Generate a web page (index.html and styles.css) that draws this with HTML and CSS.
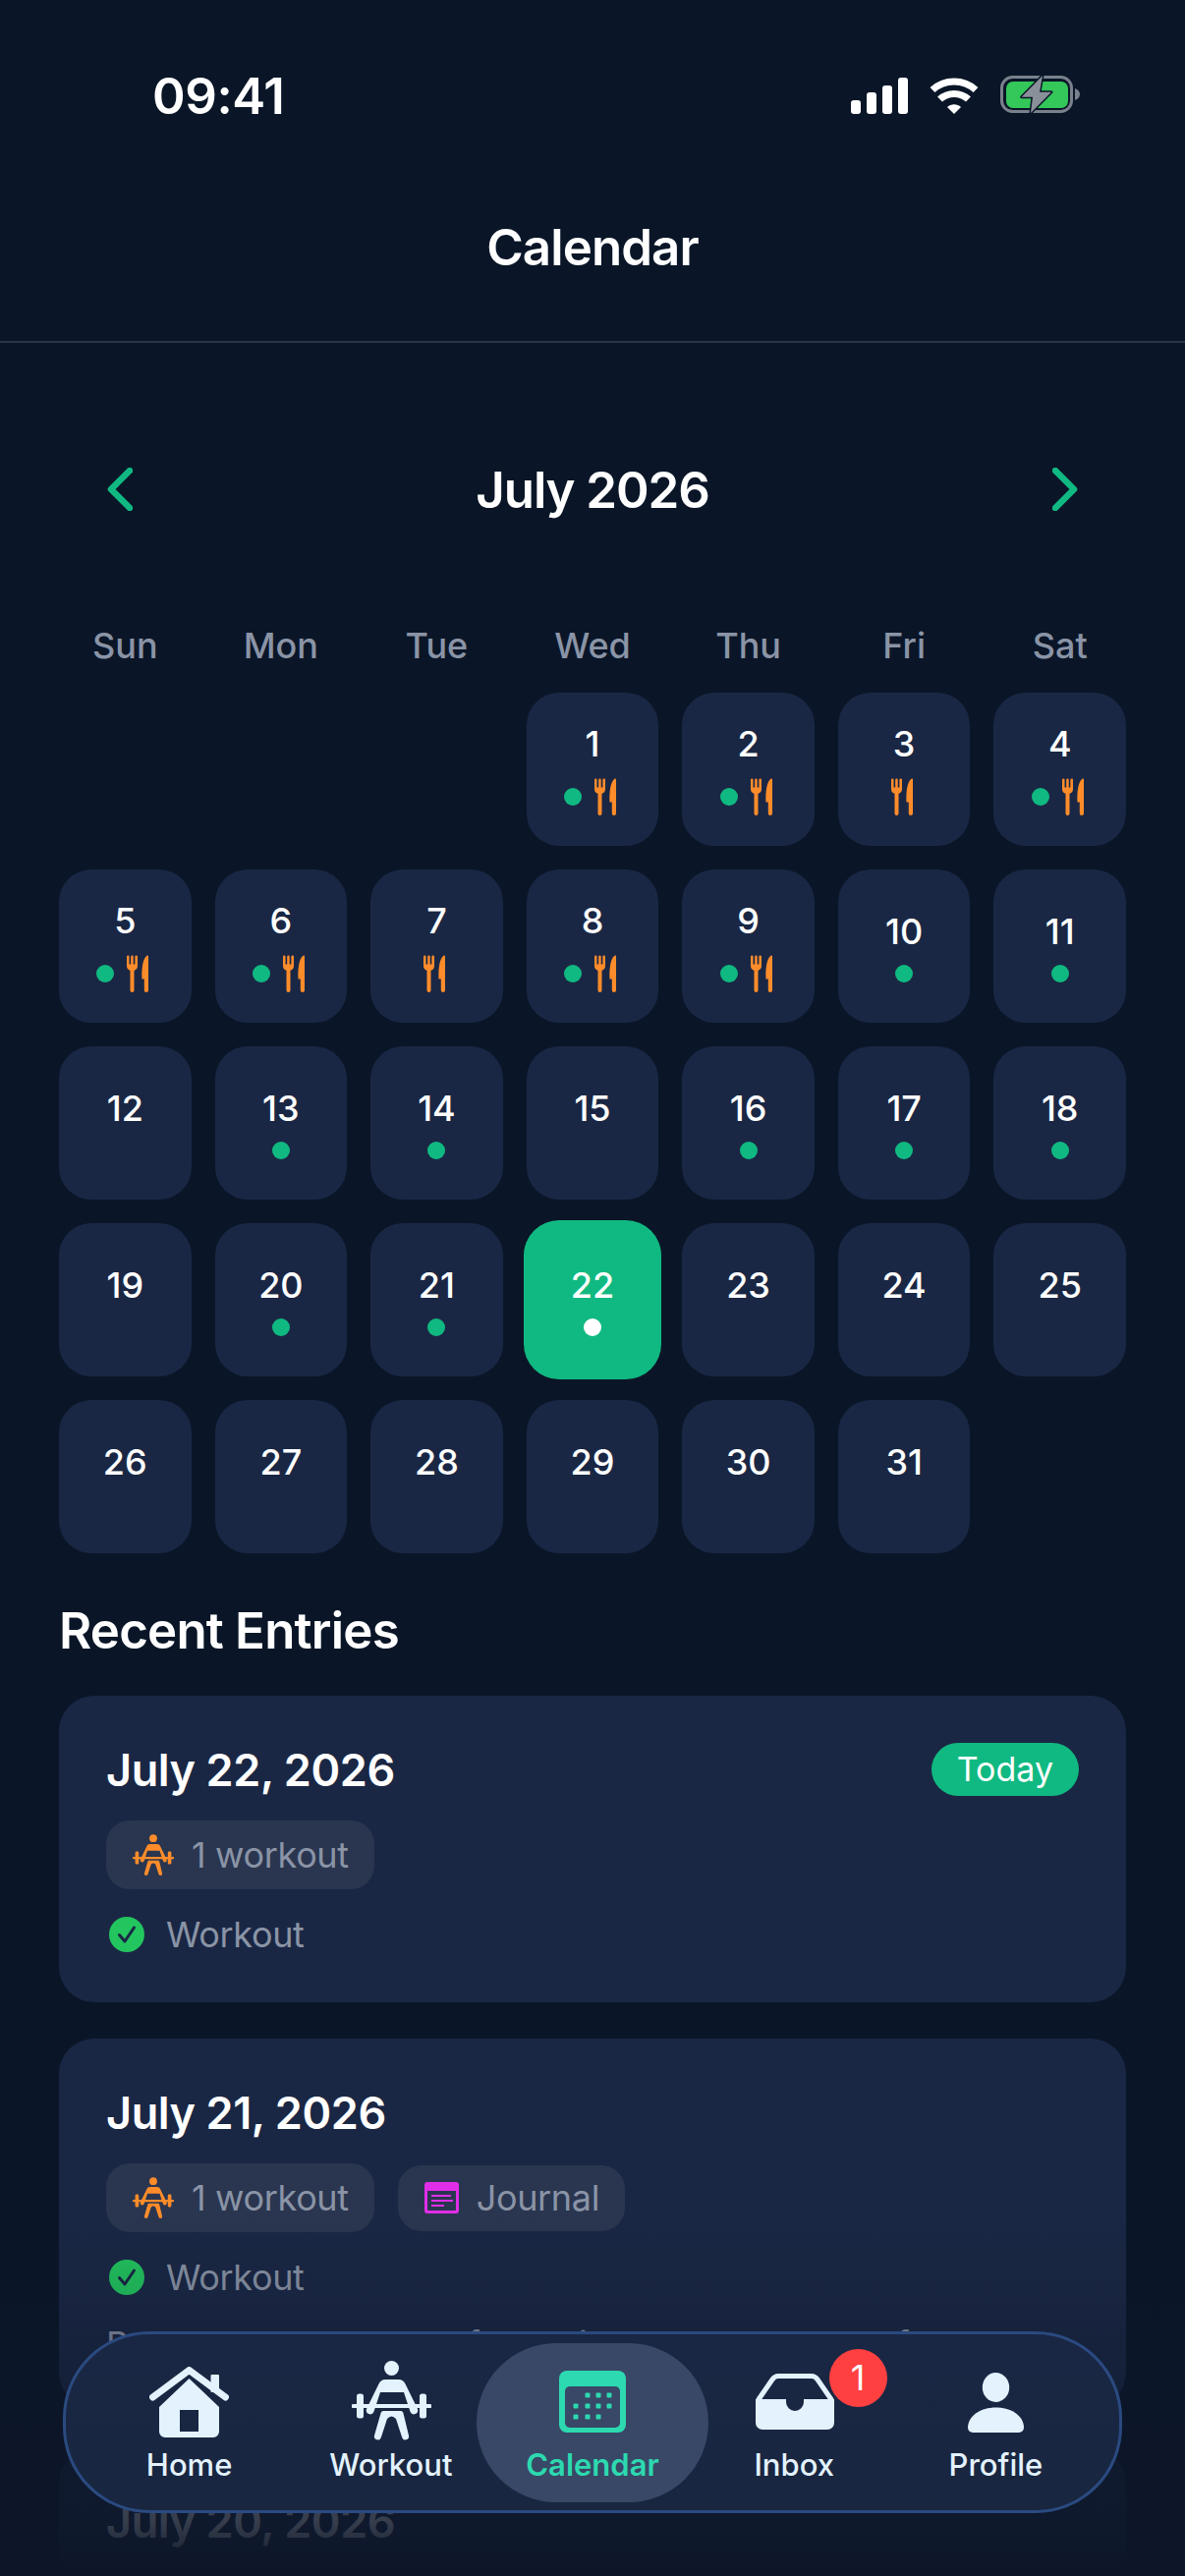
FILE: index.html
```html
<!DOCTYPE html>
<html lang="en">
<head>
<meta charset="utf-8">
<title>Calendar</title>
<link rel="stylesheet" href="styles.css">
</head>
<body>
<svg class="defs" width="0" height="0" aria-hidden="true">
  <symbol id="meal" viewBox="0 0 28 38">
    <path transform="translate(1 .5)" d="M0 1.200a1.200 1.200 0 0 1 2.500 0V9h1.700V1.200a1.200 1.200 0 0 1 2.500 0V9h1.700V1.200a1.200 1.200 0 0 1 2.600 0v9.600c0 2.400-1.600 4-3.500 4.500v20.100a2 2 0 0 1-4 0V15.300C1.600 14.800 0 13.200 0 10.800z"/>
    <path transform="translate(1 .5)" d="M22 1v34.400a2.100 2.100 0 0 1-4.200 0V24h-2.300C15 15 16 3 20.500.2 21.200-.2 22 .2 22 1z"/>
  </symbol>
  <symbol id="lifter" viewBox="0 0 81 82">
    <circle cx="40.5" cy="7.5" r="7.5"/>
    <path d="M34 19h14c3 0 5 1.5 6.500 4.500L67 49a4 4 0 0 1-7.400 3L53 32H29l-6.600 20a4 4 0 0 1-7.400-3l12.500-25.500C29 20.500 31 19 34 19z"/>
    <path d="M1.500 44H5v-8a2.500 2.500 0 0 1 2.500-2.500h2A2.500 2.500 0 0 1 12 36v8h57v-8a2.500 2.500 0 0 1 2.500-2.500h2A2.500 2.500 0 0 1 76 36v8h3.500a2 2 0 0 1 0 4H76v8a2.500 2.500 0 0 1-2.500 2.500h-2A2.500 2.500 0 0 1 69 56v-8H12v8a2.500 2.500 0 0 1-2.500 2.500h-2A2.500 2.500 0 0 1 5 56v-8H1.500a2 2 0 0 1 0-4z"/>
    <path d="M32 51h18c1 0 2 .7 2.400 2L58 76a3.500 3.500 0 0 1-7 1.600L45 59q-4.500-5-9 0l-6 18.600a3.500 3.500 0 0 1-7-1.600l6.600-23c.4-1.300 1.400-2 2.400-2z"/>
  </symbol>
  <symbol id="journal" viewBox="0 0 35 32">
    <path fill-rule="evenodd" d="M3 0h29a3 3 0 0 1 3 3v26a3 3 0 0 1-3 3H3a3 3 0 0 1-3-3V3a3 3 0 0 1 3-3zm0 9v19a1 1 0 0 0 1 1h27a1 1 0 0 0 1-1V9z"/>
    <path d="M7 13h20v2H7zM7 18h22v2H7zM7 23h13v2H7z"/>
  </symbol>
  <symbol id="check" viewBox="0 0 36 36">
    <circle cx="18" cy="18" r="18" fill="#22c55e"/>
    <path d="M10.500 18.500l5.500 6.500 9.500-14" fill="none" stroke="#1a2744" stroke-width="3" stroke-linecap="round" stroke-linejoin="round"/>
  </symbol>
</svg>

<div class="phone">
  <header class="top">
    <div class="status">
      <span class="time">09:41</span>
      <div class="status-icons">
        <svg class="ic-signal" viewBox="0 0 58 37" fill="#fff"><rect x="0" y="23" width="10" height="14" rx="3"/><rect x="16" y="15" width="10" height="22" rx="3"/><rect x="32" y="8" width="10" height="29" rx="3"/><rect x="48" y="0" width="10" height="37" rx="3"/></svg>
        <svg class="ic-wifi" viewBox="0 0 50 37"><path d="M3 12.500C15 1 35 1 47 12.500" fill="none" stroke="#fff" stroke-width="7"/><path d="M10.500 22C18.500 14.500 31.500 14.500 39.500 22" fill="none" stroke="#fff" stroke-width="7"/><path d="M18 30c4-3.800 10-3.800 14 0l-7 7z" fill="#fff"/></svg>
        <svg class="ic-battery" viewBox="0 0 82 40">
          <rect x="1.500" y="1.500" width="71" height="35" rx="11" fill="none" stroke="#7a818c" stroke-width="3"/>
          <rect x="6" y="6" width="63" height="27" rx="7" fill="#34c759"/>
          <path d="M76 13c3 1 5 3 5 6s-2 5-5 6z" fill="#7a818c"/>
          <path d="M43 0L21.700 21.700H33L31 38 52 16.700H40z" fill="#8a9099" stroke="#0a1628" stroke-width="3" stroke-linejoin="round" paint-order="stroke"/>
        </svg>
      </div>
    </div>
    <h1 class="title">Calendar</h1>
  </header>

  <main class="main">
    <div class="month">
      <svg class="chev" viewBox="0 0 26 44"><path d="M23 3L4 22l19 19"/></svg>
      <h2 class="month-name">July 2026</h2>
      <svg class="chev" viewBox="0 0 26 44"><path d="M3 3l19 19L3 41"/></svg>
    </div>

    <div class="weekdays">
      <span>Sun</span><span>Mon</span><span>Tue</span><span>Wed</span><span>Thu</span><span>Fri</span><span>Sat</span>
    </div>

    <div class="grid">
      <div class="blank"></div><div class="blank"></div><div class="blank"></div>
      <div class="day"><span class="num">1</span><div class="marks"><i class="dot"></i><svg class="meal"><use href="#meal"/></svg></div></div>
      <div class="day"><span class="num">2</span><div class="marks"><i class="dot"></i><svg class="meal"><use href="#meal"/></svg></div></div>
      <div class="day"><span class="num">3</span><div class="marks"><svg class="meal"><use href="#meal"/></svg></div></div>
      <div class="day"><span class="num">4</span><div class="marks"><i class="dot"></i><svg class="meal"><use href="#meal"/></svg></div></div>

      <div class="day"><span class="num">5</span><div class="marks"><i class="dot"></i><svg class="meal"><use href="#meal"/></svg></div></div>
      <div class="day"><span class="num">6</span><div class="marks"><i class="dot"></i><svg class="meal"><use href="#meal"/></svg></div></div>
      <div class="day"><span class="num">7</span><div class="marks"><svg class="meal"><use href="#meal"/></svg></div></div>
      <div class="day"><span class="num">8</span><div class="marks"><i class="dot"></i><svg class="meal"><use href="#meal"/></svg></div></div>
      <div class="day"><span class="num">9</span><div class="marks"><i class="dot"></i><svg class="meal"><use href="#meal"/></svg></div></div>
      <div class="day"><span class="num">10</span><div class="marks"><i class="dot"></i></div></div>
      <div class="day"><span class="num">11</span><div class="marks"><i class="dot"></i></div></div>

      <div class="day"><span class="num">12</span><div class="marks"></div></div>
      <div class="day"><span class="num">13</span><div class="marks"><i class="dot"></i></div></div>
      <div class="day"><span class="num">14</span><div class="marks"><i class="dot"></i></div></div>
      <div class="day"><span class="num">15</span><div class="marks"></div></div>
      <div class="day"><span class="num">16</span><div class="marks"><i class="dot"></i></div></div>
      <div class="day"><span class="num">17</span><div class="marks"><i class="dot"></i></div></div>
      <div class="day"><span class="num">18</span><div class="marks"><i class="dot"></i></div></div>

      <div class="day"><span class="num">19</span><div class="marks"></div></div>
      <div class="day"><span class="num">20</span><div class="marks"><i class="dot"></i></div></div>
      <div class="day"><span class="num">21</span><div class="marks"><i class="dot"></i></div></div>
      <div class="day today"><span class="num">22</span><div class="marks"><i class="dot"></i></div></div>
      <div class="day"><span class="num">23</span><div class="marks"></div></div>
      <div class="day"><span class="num">24</span><div class="marks"></div></div>
      <div class="day"><span class="num">25</span><div class="marks"></div></div>

      <div class="day"><span class="num">26</span><div class="marks"></div></div>
      <div class="day"><span class="num">27</span><div class="marks"></div></div>
      <div class="day"><span class="num">28</span><div class="marks"></div></div>
      <div class="day"><span class="num">29</span><div class="marks"></div></div>
      <div class="day"><span class="num">30</span><div class="marks"></div></div>
      <div class="day"><span class="num">31</span><div class="marks"></div></div>
    </div>

    <h3 class="recent">Recent Entries</h3>

    <section class="card">
      <div class="card-head">
        <span class="date">July 22, 2026</span>
        <span class="pill-today">Today</span>
      </div>
      <div class="chips">
        <span class="chip"><svg class="chip-lifter"><use href="#lifter"/></svg>1 workout</span>
      </div>
      <div class="done"><svg class="check"><use href="#check"/></svg>Workout</div>
    </section>

    <section class="card card-long">
      <div class="card-head">
        <span class="date">July 21, 2026</span>
      </div>
      <div class="chips">
        <span class="chip"><svg class="chip-lifter"><use href="#lifter"/></svg>1 workout</span>
        <span class="chip chip-short"><svg class="chip-journal"><use href="#journal"/></svg>Journal</span>
      </div>
      <div class="done"><svg class="check"><use href="#check"/></svg>Workout</div>
      <p class="note">Post-workout stretch felt solid. Felt really good for</p>
    </section>

    <section class="card">
      <div class="card-head">
        <span class="date">July 20, 2026</span>
      </div>
    </section>
  </main>

  <div class="fade"></div>

  <nav class="nav">
    <a class="nav-item">
      <svg class="ic-home" viewBox="0 0 81 72">
        <rect x="62.500" y="8" width="8.500" height="18" rx="1"/>
        <path fill-rule="evenodd" d="M40.500 12L71 41v25a6 6 0 0 1-6 6H16a6 6 0 0 1-6-6V41zM31 44v22h19V44z"/>
        <path d="M3.500 31L40.500 3.500 77.500 31" fill="none" stroke="currentColor" stroke-width="7" stroke-linecap="round" stroke-linejoin="round"/>
      </svg>
      <span>Home</span>
    </a>
    <a class="nav-item">
      <svg class="ic-lifter"><use href="#lifter"/></svg>
      <span>Workout</span>
    </a>
    <a class="nav-item active">
      <svg class="ic-cal" viewBox="0 0 68 63">
        <rect width="68" height="63" rx="8" fill="#2dd9b0"/>
        <rect x="6" y="16" width="56" height="42" rx="5" fill="#384866"/>
        <g fill="#2dd9b0">
          <rect x="26.500" y="22.500" width="5" height="5" rx="1"/><rect x="37.500" y="22.500" width="5" height="5" rx="1"/><rect x="48.500" y="22.500" width="5" height="5" rx="1"/>
          <rect x="14.500" y="33.500" width="5" height="5" rx="1"/><rect x="26.500" y="33.500" width="5" height="5" rx="1"/><rect x="37.500" y="33.500" width="5" height="5" rx="1"/><rect x="48.500" y="33.500" width="5" height="5" rx="1"/>
          <rect x="14.500" y="44.500" width="5" height="5" rx="1"/><rect x="26.500" y="44.500" width="5" height="5" rx="1"/><rect x="37.500" y="44.500" width="5" height="5" rx="1"/>
        </g>
      </svg>
      <span>Calendar</span>
    </a>
    <a class="nav-item">
      <svg class="ic-inbox" viewBox="0 0 80 58">
        <path d="M2.500 27L17 6q2.500-3.500 6-3.500h34q3.500 0 6 3.500l14.500 21" fill="none" stroke="currentColor" stroke-width="5" stroke-linejoin="round"/>
        <path d="M0 26h31v3a9 9 0 0 0 18 0v-3h31v24a7 7 0 0 1-7 7H7a7 7 0 0 1-7-7z"/>
      </svg>
      <span>Inbox</span>
      <b class="badge">1</b>
    </a>
    <a class="nav-item">
      <svg class="ic-profile" viewBox="0 0 57 61">
        <ellipse cx="28.500" cy="15" rx="13.700" ry="15"/>
        <path d="M0 56C0 44 13 35.500 28.500 35.500S57 44 57 56a5 5 0 0 1-5 5H5a5 5 0 0 1-5-5z"/>
      </svg>
      <span>Profile</span>
    </a>
  </nav>
</div>
</body>
</html>
```

FILE: styles.css
```css
* { box-sizing: border-box; }
html, body { margin: 0; padding: 0; }
body { background: #0a1628; font-family: Inter, "Liberation Sans", sans-serif; color: #fff; }
.defs { position: absolute; }
.phone { position: relative; width: 1206px; height: 2622px; overflow: hidden; background: #0a1628; }

.top { height: 349px; border-bottom: 2px solid #2a3446; }
.status { height: 194px; display: flex; align-items: center; justify-content: space-between; padding: 0 106px 0 155px; }
.time { font-size: 51px; font-weight: 600; letter-spacing: -.4px; }
.status-icons { display: flex; align-items: center; gap: 22px; }
.ic-signal { width: 58px; height: 37px; }
.ic-wifi { width: 50px; height: 37px; }
.ic-battery { width: 82px; height: 40px; }
.title { margin: 0; height: 116px; line-height: 116px; font-size: 51px; font-weight: 600; letter-spacing: -.9px; text-align: center; }

.main { padding: 0 60px; }
.month { height: 80px; margin-top: 109px; padding: 0 49px; display: flex; align-items: center; justify-content: space-between; }
.chev { width: 26px; height: 44px; fill: none; stroke: #10b981; stroke-width: 6.500; stroke-linecap: round; stroke-linejoin: round; }
.month-name { margin: 0; font-size: 51px; font-weight: 600; letter-spacing: -1.1px; }

.weekdays { margin-top: 99px; height: 40px; display: grid; grid-template-columns: repeat(7, 1fr); column-gap: 24px; }
.weekdays span { text-align: center; font-size: 36px; line-height: 40px; font-weight: 500; color: #8a94a6; }

.grid { margin-top: 28px; display: grid; grid-template-columns: repeat(7, 1fr); grid-auto-rows: 156px; gap: 24px; }
.day { display: flex; flex-direction: column; align-items: center; justify-content: center; gap: 14px; padding-top: 2px; background: #1a2744; border-radius: 33px; }
.num { font-size: 36px; line-height: 40px; font-weight: 500; }
.marks { min-height: 18px; display: flex; align-items: center; gap: 12px; }
.dot { width: 18px; height: 18px; border-radius: 50%; background: #10b981; }
.meal { width: 28px; height: 40px; fill: #ff8c2a; }
.today { margin: -3px; background: #10b981; border-radius: 36px; }
.today .dot { background: #fff; }

.recent { margin: 54px 0 0; height: 50px; line-height: 50px; font-size: 51px; font-weight: 600; letter-spacing: -.8px; }

.card { margin-top: 41px; padding: 47px 48px 0; background: #1a2744; border-radius: 36px; height: 312px; }
.card-long { margin-top: 37px; height: 376px; }
.card-long + .card { margin-top: 40px; }
.card-head { display: flex; align-items: center; justify-content: space-between; height: 56px; }
.date { font-size: 45px; font-weight: 600; letter-spacing: -.4px; }
.pill-today { height: 54px; line-height: 54px; padding: 0 26px; border-radius: 27px; background: #10b981; font-size: 34px; }
.chips { margin-top: 24px; display: flex; align-items: center; gap: 24px; }
.chip { height: 70px; padding: 0 26px 0 27px; display: flex; align-items: center; gap: 18px; border-radius: 24px; background: #2a3650; color: #8a94a6; font-size: 36px; letter-spacing: -.35px; }
.chip-short { height: 67px; }
.chip-lifter { width: 42px; height: 43px; fill: #ff8c2a; }
.chip-journal { width: 35px; height: 32px; fill: #e02ee8; }
.done { margin-top: 28px; height: 36px; padding-left: 3px; display: flex; align-items: center; gap: 22px; color: #8a94a6; font-size: 36px; letter-spacing: -.35px; }
.check { width: 36px; height: 36px; }
.note { margin: 28px 0 0; font-size: 36px; line-height: 44px; color: #8a94a6; white-space: nowrap; }

.fade { position: absolute; left: 0; right: 0; bottom: 0; height: 372px; background: linear-gradient(to bottom, rgba(13,22,40,0) 0%, rgba(13,22,40,.15) 24%, rgba(13,22,40,.4) 46%, rgba(13,22,40,.75) 66%, rgba(13,22,40,.83) 85%, #0d1628 100%); }

.nav { position: absolute; left: 64px; top: 2373px; width: 1078px; height: 185px; padding: 0 23px; display: flex; border: 3px solid #2a4a80; border-radius: 88px; background: linear-gradient(to bottom, #1a2744, #182640); }
.nav-item { position: relative; flex: 1; display: flex; flex-direction: column; align-items: center; color: #e3f2fd; font-size: 31px; font-weight: 500; }
.nav-item svg { position: relative; fill: currentColor; }
.nav-item span { position: absolute; top: 115px; line-height: 36px; }
.active { color: #2dd9b0; font-weight: 600; }
.active::before { content: ""; position: absolute; left: -15px; right: -15px; top: 9px; height: 162px; border-radius: 81px; background: #384866; }
.ic-home { width: 81px; height: 72px; margin-top: 33px; }
.ic-lifter { width: 81px; height: 82px; margin: 27px 0 0 2px; }
.ic-cal { width: 68px; height: 63px; margin-top: 37px; }
.ic-inbox { width: 80px; height: 58px; margin: 40px 0 0 2px; }
.ic-profile { width: 57px; height: 61px; margin-top: 39px; }
.badge { position: absolute; left: 138px; top: 15px; width: 59px; height: 59px; border-radius: 50%; background: #ff4040; color: #fff; font-size: 36px; font-weight: 400; line-height: 59px; text-align: center; }
```
